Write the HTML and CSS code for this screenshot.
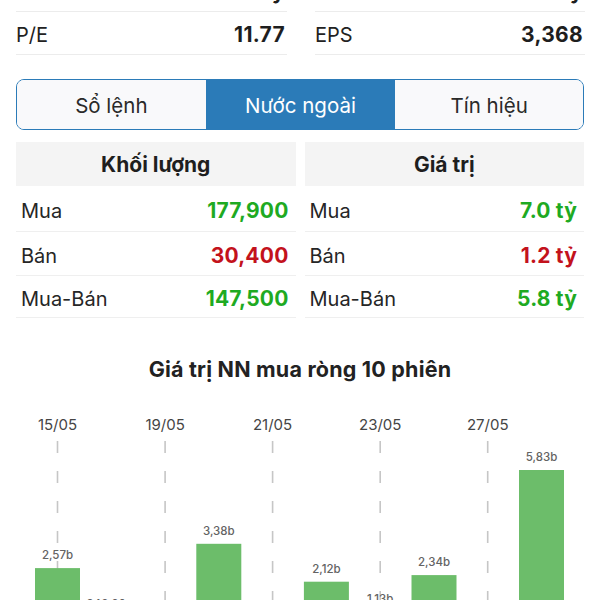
FILE: index.html
```html
<!DOCTYPE html>
<html lang="vi">
<head>
<meta charset="utf-8">
<title>Nước ngoài</title>
<link rel="stylesheet" href="styles.css">
</head>
<body>
<main class="page">
  <section class="stats stats-prev">
    <div class="stat"><span class="stat-label">Vốn hóa</span><span class="stat-value">842 tỷ</span></div>
    <div class="stat"><span class="stat-label">Doanh thu</span><span class="stat-value">715 tỷ</span></div>
  </section>
  <section class="stats">
    <div class="stat"><span class="stat-label">P/E</span><span class="stat-value">11.77</span></div>
    <div class="stat"><span class="stat-label">EPS</span><span class="stat-value">3,368</span></div>
  </section>

  <nav class="segmented">
    <button class="seg">Sổ lệnh</button>
    <button class="seg active">Nước ngoài</button>
    <button class="seg">Tín hiệu</button>
  </nav>

  <section class="tables">
    <div class="table">
      <div class="table-head">Khối lượng</div>
      <div class="row"><span class="label">Mua</span><span class="val up">177,900</span></div>
      <div class="row"><span class="label">Bán</span><span class="val down">30,400</span></div>
      <div class="row"><span class="label">Mua-Bán</span><span class="val up">147,500</span></div>
    </div>
    <div class="table">
      <div class="table-head">Giá trị</div>
      <div class="row"><span class="label">Mua</span><span class="val up">7.0 tỷ</span></div>
      <div class="row"><span class="label">Bán</span><span class="val down">1.2 tỷ</span></div>
      <div class="row"><span class="label">Mua-Bán</span><span class="val up">5.8 tỷ</span></div>
    </div>
  </section>

  <section class="chart">
    <h2 class="chart-title">Giá trị NN mua ròng 10 phiên</h2>
    <svg class="chart-svg" width="600" height="250" viewBox="0 0 600 250">
      <g class="dates">
        <text x="57.5" y="29">15/05</text>
        <text x="165.1" y="29">19/05</text>
        <text x="272.6" y="29">21/05</text>
        <text x="380.2" y="29">23/05</text>
        <text x="487.7" y="29">27/05</text>
      </g>
      <g class="grid">
        <line x1="57.5" y1="40" x2="57.5" y2="245"/>
        <line x1="165.1" y1="40" x2="165.1" y2="245"/>
        <line x1="272.6" y1="40" x2="272.6" y2="245"/>
        <line x1="380.2" y1="40" x2="380.2" y2="245"/>
        <line x1="487.7" y1="40" x2="487.7" y2="245"/>
      </g>
      <g class="bars">
        <rect x="35" y="167.1" width="45" height="77.4"/>
        <rect x="88.8" y="215.9" width="45" height="28.6"/>
        <rect x="142.6" y="231" width="45" height="13.5"/>
        <rect x="196.3" y="142.8" width="45" height="101.7"/>
        <rect x="250.1" y="225.8" width="45" height="18.7"/>
        <rect x="303.9" y="180.7" width="45" height="63.8"/>
        <rect x="357.7" y="210.5" width="45" height="34"/>
        <rect x="411.5" y="174.1" width="45" height="70.4"/>
        <rect x="465.2" y="235.2" width="45" height="9.3"/>
        <rect x="519" y="69" width="45" height="175.5"/>
      </g>
      <g class="bar-labels">
        <text x="57.5" y="158">2,57b</text>
        <text x="111.3" y="207">948,60m</text>
        <text x="165.1" y="222">450,10m</text>
        <text x="218.8" y="134">3,38b</text>
        <text x="272.6" y="217">620,40m</text>
        <text x="326.4" y="172">2,12b</text>
        <text x="380.2" y="201.5">1,13b</text>
        <text x="434" y="165">2,34b</text>
        <text x="487.7" y="226">310,20m</text>
        <text x="541.5" y="60">5,83b</text>
      </g>
    </svg>
  </section>
</main>
</body>
</html>
```

FILE: styles.css
```css
html, body {
  margin: 0;
  padding: 0;
  background: #ffffff;
}

body {
  font-family: Inter, "Noto Sans", "Liberation Sans", sans-serif;
  color: #222222;
  width: 600px;
  overflow: hidden;
}

.page {
  padding: 0 16px;
}

.stats {
  display: grid;
  grid-template-columns: 271px 270px;
  column-gap: 28px;
}

.stats-prev {
  margin-top: -31px;
}

.stat {
  display: flex;
  align-items: center;
  justify-content: space-between;
  height: 43px;
  padding-top: 3px;
  box-sizing: border-box;
  border-bottom: 1px solid #ececec;
  font-size: 20px;
}

.stat-label {
  font-weight: 400;
  color: #222;
}

.stat-value {
  font-weight: 700;
  font-size: 21px;
  letter-spacing: 0.3px;
  color: #1e1e1e;
  padding-right: 2px;
}

.segmented {
  display: grid;
  grid-template-columns: 1fr 1fr 1fr;
  margin-top: 24px;
  height: 51px;
  border: 1.5px solid #2b7bb8;
  border-radius: 8px;
  overflow: hidden;
  box-sizing: border-box;
}

.seg {
  font-family: inherit;
  font-size: 20.5px;
  color: #2a2a2a;
  background: #f9f9fb;
  border: none;
  border-left: 1.5px solid #2b7bb8;
  margin: 0;
  padding: 2px 0 0;
}

.seg:first-child {
  border-left: none;
}

.seg.active {
  background: #2b7bb8;
  color: #ffffff;
}

.tables {
  display: grid;
  grid-template-columns: 1fr 1fr;
  column-gap: 9px;
  margin-top: 12px;
}

.table-head {
  display: flex;
  align-items: center;
  justify-content: center;
  height: 44px;
  background: #f4f4f4;
  font-size: 21px;
  font-weight: 700;
  color: #1e1e1e;
}

.row {
  display: flex;
  align-items: center;
  justify-content: space-between;
  height: 44px;
  box-sizing: border-box;
  padding: 4px 7px 0 5px;
  border-bottom: 1px solid #efefef;
  font-size: 20px;
}

.row:nth-child(2) {
  height: 46px;
}

.row:nth-child(4) {
  height: 42px;
}

.label {
  color: #262626;
}

.val {
  font-weight: 700;
  font-size: 21px;
  letter-spacing: 0.2px;
}

.val.up {
  color: #1eaa22;
}

.val.down {
  color: #c3121c;
}

.chart {
  margin: 0 -16px;
}

.chart-title {
  margin: 38px 0 0;
  height: 45px;
  font-size: 21.5px;
  line-height: 26px;
  letter-spacing: 0.2px;
  font-weight: 700;
  text-align: center;
  color: #222;
}

.chart-svg {
  display: block;
}

.dates text {
  font-family: Inter, "Noto Sans", sans-serif;
  font-size: 15px;
  fill: #454545;
  text-anchor: middle;
}

.grid line {
  stroke: #c6c6c6;
  stroke-width: 1.6;
  stroke-dasharray: 12 18;
}

.bars rect {
  fill: #6cbd6a;
}

.bar-labels text {
  font-family: Inter, "Noto Sans", sans-serif;
  font-size: 11.5px;
  font-weight: 500;
  fill: #636363;
  text-anchor: middle;
}
```
